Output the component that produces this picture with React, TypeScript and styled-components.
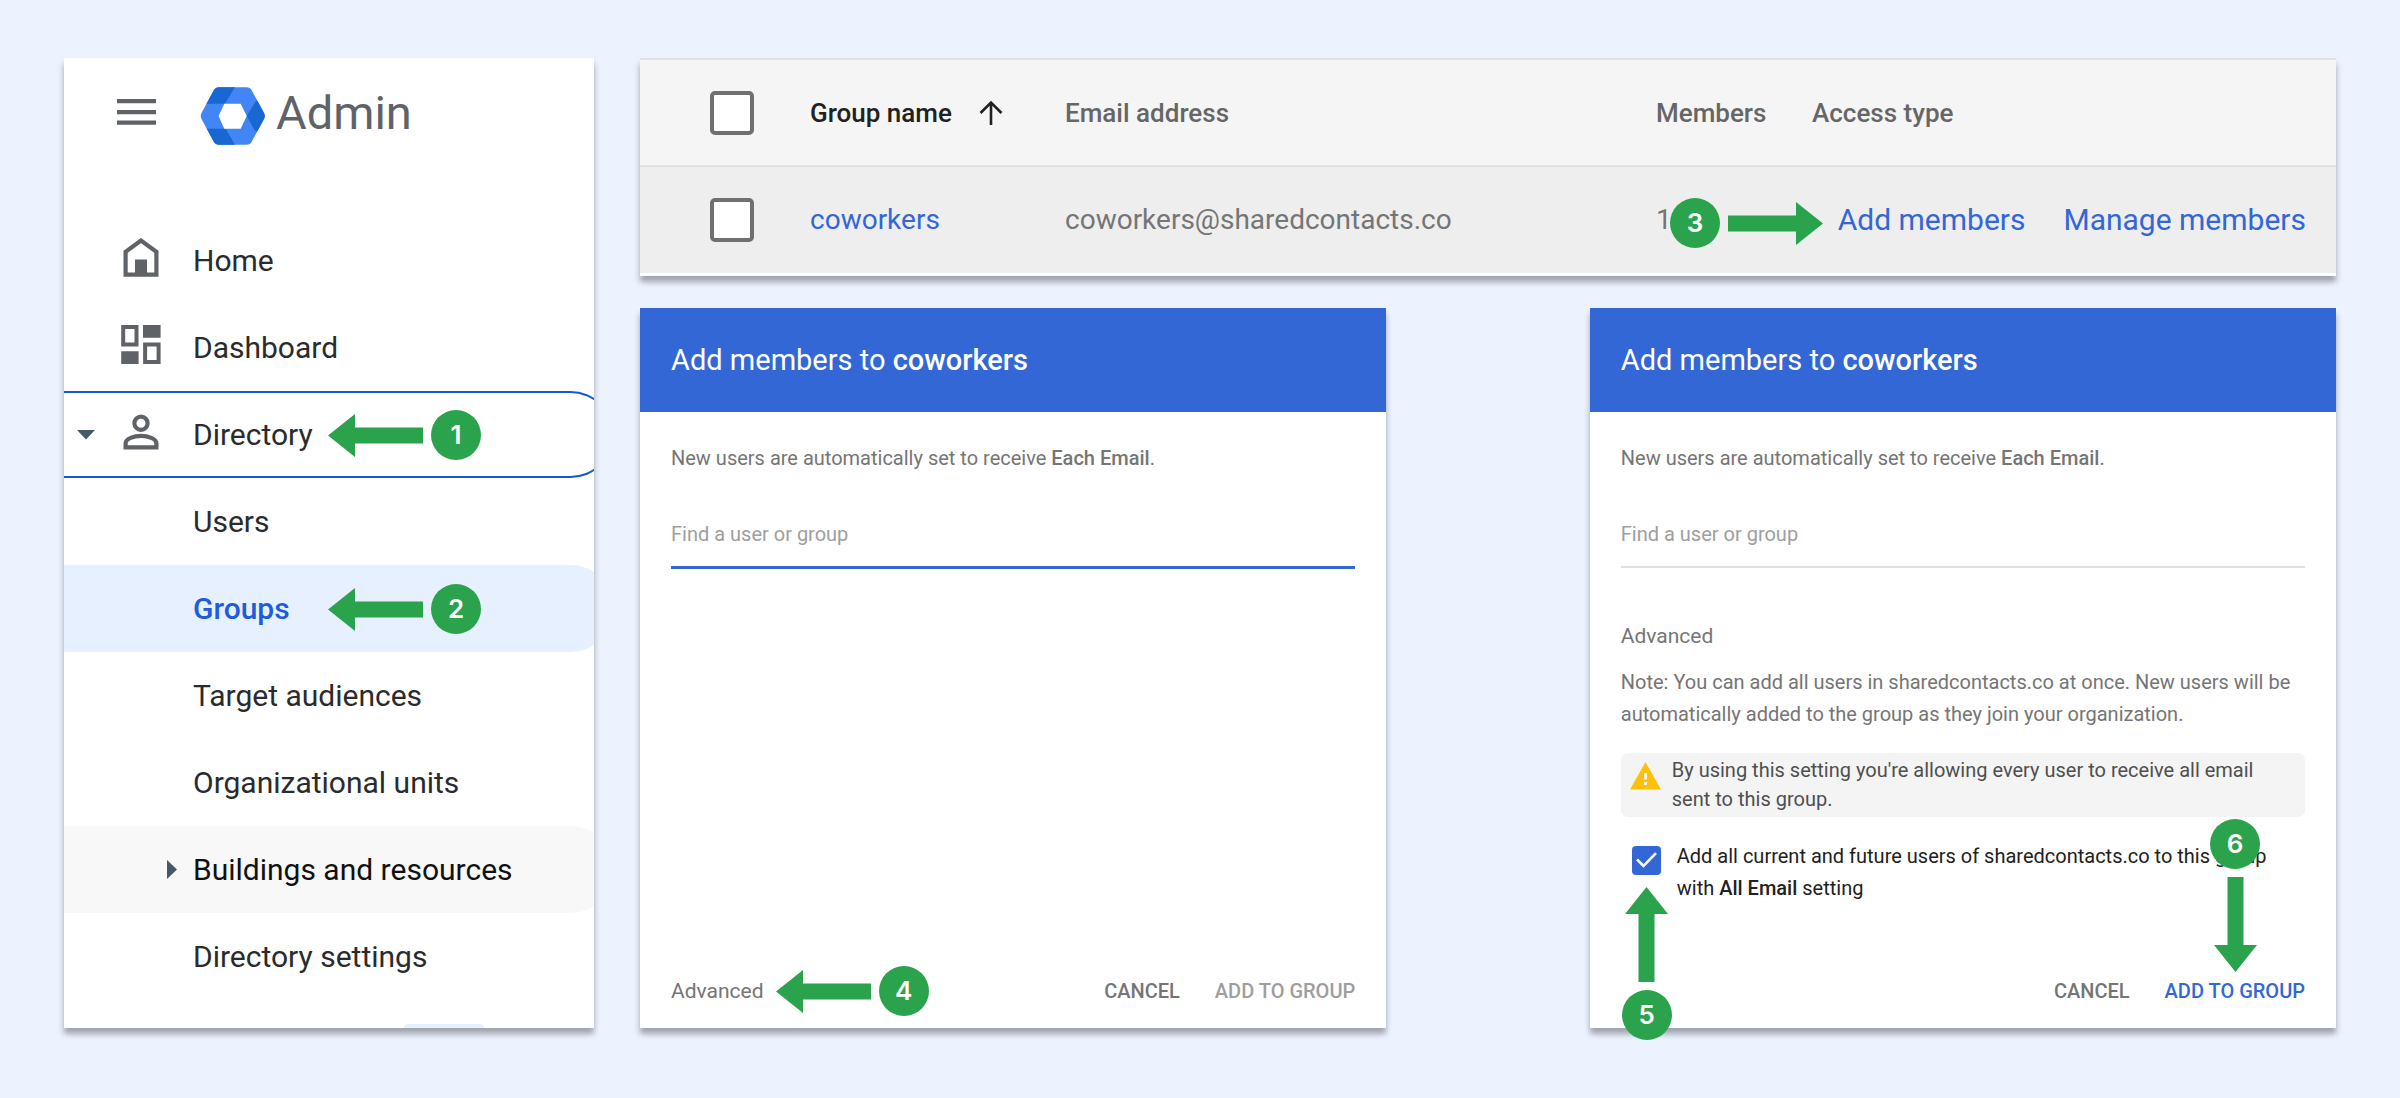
import React from "react";
import styled, { createGlobalStyle, css } from "styled-components";

const color = {
  page: "#ecf3ff",
  blue: "#3367d6",
  green: "#2ba24c",
  grey: "#757575",
  icon: "#5f6368",
  ink: "#212121",
};

const GlobalStyle = createGlobalStyle`
  *, *::before, *::after { box-sizing: border-box; }
  body {
    margin: 0;
    background: ${color.page};
    font-family: Roboto, "Liberation Sans", sans-serif;
    color: ${color.ink};
  }
  button, input { font-family: inherit; }
  strong { font-weight: 500; }
`;

const cardShadow = css`
  box-shadow: 0 6px 6px rgba(0, 0, 0, 0.33);
`;

const Page = styled.main`
  display: flex;
  gap: 46px;
  min-height: 100vh;
  padding: 58px 64px 70px;
`;

/* ---------- callouts ---------- */

type Direction = "left" | "right" | "up" | "down";

const flow: Record<Direction, string> = {
  left: "row",
  right: "row-reverse",
  up: "column",
  down: "column-reverse",
};

const CalloutBox = styled.div<{ $direction: Direction }>`
  display: flex;
  flex-direction: ${(p) => flow[p.$direction]};
  align-items: center;
  gap: 8px;
`;

const Badge = styled.span`
  display: flex;
  align-items: center;
  justify-content: center;
  width: 50px;
  height: 50px;
  border-radius: 50%;
  background: ${color.green};
  color: #fff;
  font-family: Inter, "Liberation Sans", sans-serif;
  font-size: 26px;
  font-weight: 600;
  line-height: 32px;
`;

const Arrow = styled.svg`
  display: block;
  fill: ${color.green};
`;

const shapes: Record<Direction, { w: number; h: number; points: string }> = {
  left: { w: 95, h: 43, points: "0,21.5 27,0 27,13.5 95,13.5 95,29.5 27,29.5 27,43" },
  right: { w: 95, h: 43, points: "95,21.5 68,0 68,13.5 0,13.5 0,29.5 68,29.5 68,43" },
  up: { w: 43, h: 95, points: "21.5,0 43,27 29.5,27 29.5,95 13.5,95 13.5,27 0,27" },
  down: { w: 43, h: 95, points: "21.5,95 43,68 29.5,68 29.5,0 13.5,0 13.5,68 0,68" },
};

function Callout({ step, direction }: { step: number; direction: Direction }) {
  const { w, h, points } = shapes[direction];
  return (
    <CalloutBox $direction={direction}>
      <Arrow width={w} height={h} viewBox={`0 0 ${w} ${h}`} aria-hidden="true">
        <polygon points={points} />
      </Arrow>
      <Badge>{step}</Badge>
    </CalloutBox>
  );
}

/* ---------- sidebar ---------- */

const Sidebar = styled.aside`
  display: flex;
  flex-direction: column;
  flex: 1;
  overflow: hidden;
  background: #fff;
`;

const SidebarShell = styled.div`
  display: flex;
  flex: 0 0 530px;
  ${cardShadow}
`;

const Brand = styled.header`
  display: flex;
  align-items: center;
  height: 64px;
  margin: 23px 0 72px 53px;
`;

const MenuButton = styled.button`
  display: block;
  padding: 0;
  border: 0;
  background: none;
  color: ${color.icon};

  svg { display: block; }
`;

const Logo = styled.svg`
  margin: 0 10px 0 43px;
`;

const BrandName = styled.span`
  color: ${color.icon};
  font-size: 47px;
  line-height: 64px;
`;

const NavList = styled.ul`
  margin: 0;
  padding: 0;
  list-style: none;
`;

type Look = "plain" | "outlined" | "selected" | "hovered";

const looks: Record<Look, ReturnType<typeof css>> = {
  plain: css``,
  outlined: css`
    border-color: #1558d6;
  `,
  selected: css`
    background: #e6f0ff;
    color: #205bdb;
    font-weight: 500;
  `,
  hovered: css`
    background: #f8f8f8;
    color: #111;
  `,
};

const NavItem = styled.li<{ $look: Look }>`
  position: relative;
  display: flex;
  align-items: center;
  height: 87px;
  margin-right: -20px;
  border: 2px solid transparent;
  border-left: 0;
  border-radius: 0 44px 44px 0;
  color: #2a2b2d;
  font-size: 30px;
  line-height: 40px;
  ${(p) => looks[p.$look]}
`;

const NavLink = styled.a`
  display: flex;
  align-items: center;
  flex: 1;
  padding-left: 13px;
  color: inherit;
  text-decoration: none;
`;

const CaretSlot = styled.span`
  display: flex;
  width: 44px;
`;

const IconSlot = styled.span<{ $end?: boolean }>`
  display: flex;
  justify-content: ${(p) => (p.$end ? "flex-end" : "flex-start")};
  width: 56px;
  margin-right: 16px;
  color: ${color.icon};
`;

const NavCallout = styled.div`
  position: absolute;
  top: 17px;
  left: 264px;
`;

const NextPill = styled.div`
  width: 80px;
  height: 4px;
  margin: auto 0 0 340px;
  border-radius: 8px 8px 0 0;
  background: #e6f0ff;
`;

const MenuIcon = () => (
  <svg width="40" height="40" viewBox="0 0 40 40" fill="currentColor" aria-hidden="true">
    <path d="M0 6h39v4.200H0zM0 17h39v4.200H0zM0 27.600h39v4.200H0z" />
  </svg>
);

const AdminLogo = () => (
  <Logo width="66" height="64" viewBox="0 0 66 64" aria-hidden="true">
    <clipPath id="logo-outline">
      <path d="M19 6.300H46.500Q50 6.300 51.700 9.200L64 32Q65.500 35 64 38L51.700 60.800Q50 63.700 46.500 63.700H19Q15.500 63.700 13.800 60.800L1.500 38Q0 35 1.500 32L13.800 9.200Q15.500 6.300 19 6.300Z" />
    </clipPath>
    <g clipPath="url(#logo-outline)">
      <path fill="#4285f4" d="M0 0H66V64H0Z" />
      <path
        fill="#1967d2"
        d="M7.300 22.700H25L35 6.300V0H0V22.700ZM46.700 35L56 19.700L66 20V50.300H55.300ZM0 47.700H25.700L35 63.700V64H0Z"
      />
    </g>
    <path fill="#fff" d="M24.300 22.700H40.700L46.700 35L40.700 47.700H24.300L18.600 35Z" />
  </Logo>
);

const HomeIcon = () => (
  <svg width="40" height="46" viewBox="0 0 40 46" aria-hidden="true">
    <path d="M4.600 36.700V13.700L20 2.500L35.400 13.700V36.700Z" fill="none" stroke="currentColor" strokeWidth="4.200" />
    <path d="M14 21.500H26V37H14Z" fill="currentColor" />
  </svg>
);

const DashboardIcon = () => (
  <svg width="40" height="46" viewBox="0 0 40 46" aria-hidden="true">
    <path d="M2.200 2H15.500V19.500H2.200ZM24.100 19.500H37.600V37H24.100Z" fill="none" stroke="currentColor" strokeWidth="4" />
    <path d="M22 0H39.600V12.800H22ZM0.200 26.300H17.600V39H0.200Z" fill="currentColor" />
  </svg>
);

const PersonIcon = () => (
  <svg width="40" height="46" viewBox="0 0 40 46" fill="none" stroke="currentColor" strokeWidth="4.200" aria-hidden="true">
    <circle cx="20" cy="11.200" r="6.600" />
    <path d="M4.600 35.400V31.500C4.600 26.800 13 23.900 20 23.900S35.400 26.800 35.400 31.500V35.400Z" />
  </svg>
);

const CaretDown = () => (
  <svg width="18" height="10" viewBox="0 0 18 10" fill="#455a64" aria-hidden="true">
    <path d="M0 0H18L9 9.500Z" />
  </svg>
);

const CaretRight = () => (
  <svg width="10" height="19" viewBox="0 0 10 19" fill="#455a64" aria-hidden="true">
    <path d="M0 0L10 9.500L0 19Z" />
  </svg>
);

interface NavEntry {
  label: string;
  look?: Look;
  icon?: React.ReactNode;
  caret?: "down" | "right";
  step?: number;
}

const navEntries: NavEntry[] = [
  { label: "Home", icon: <HomeIcon /> },
  { label: "Dashboard", icon: <DashboardIcon /> },
  { label: "Directory", icon: <PersonIcon />, caret: "down", look: "outlined", step: 1 },
  { label: "Users" },
  { label: "Groups", look: "selected", step: 2 },
  { label: "Target audiences" },
  { label: "Organizational units" },
  { label: "Buildings and resources", caret: "right", look: "hovered" },
  { label: "Directory settings" },
];

function AdminSidebar() {
  return (
    <SidebarShell>
      <Sidebar>
        <Brand>
          <MenuButton type="button" aria-label="Main menu">
            <MenuIcon />
          </MenuButton>
          <AdminLogo />
          <BrandName>Admin</BrandName>
        </Brand>
        <nav>
          <NavList>
            {navEntries.map(({ label, look = "plain", icon, caret, step }) => (
              <NavItem key={label} $look={look}>
                <NavLink href="#">
                  <CaretSlot>{caret === "down" && <CaretDown />}</CaretSlot>
                  <IconSlot $end={caret === "right"}>
                    {icon}
                    {caret === "right" && <CaretRight />}
                  </IconSlot>
                  {label}
                </NavLink>
                {step && (
                  <NavCallout>
                    <Callout step={step} direction="left" />
                  </NavCallout>
                )}
              </NavItem>
            ))}
          </NavList>
        </nav>
        <NextPill />
      </Sidebar>
    </SidebarShell>
  );
}

/* ---------- groups table ---------- */

const Content = styled.div`
  display: flex;
  flex: 1;
  flex-direction: column;
  gap: 32px;
  min-width: 0;
`;

const TableCard = styled.section`
  padding-bottom: 3px;
  border-top: 2px solid #e0e0e0;
  background: #fff;
  ${cardShadow}
`;

const GroupsTable = styled.table`
  width: 100%;
  table-layout: fixed;
  border-collapse: separate;
  border-spacing: 0;
`;

const Col = styled.col<{ $width?: number }>`
  width: ${(p) => (p.$width ? `${p.$width}px` : "auto")};
`;

const HeadCell = styled.th<{ $active?: boolean }>`
  height: 107px;
  padding: 0;
  border-bottom: 2px solid #e0e0e0;
  background: #f5f5f5;
  color: ${(p) => (p.$active ? color.ink : "#666")};
  font-size: 26px;
  font-weight: 500;
  line-height: 32px;
  text-align: left;
`;

const Cell = styled.td`
  position: relative;
  height: 106px;
  padding: 0;
  background: #eee;
  color: ${color.grey};
  font-size: 28px;
  line-height: 32px;
`;

const RowCheckbox = styled.input`
  display: block;
  appearance: none;
  width: 44px;
  height: 44px;
  margin: 0 0 0 70px;
  border: 4px solid #707070;
  border-radius: 5px;
  background: #fff;
`;

const SortLabel = styled.span`
  display: flex;
  align-items: center;
  gap: 27px;
`;

const Link = styled.a<{ $large?: boolean }>`
  color: ${color.blue};
  font-size: ${(p) => (p.$large ? 30 : 28)}px;
  text-decoration: none;
`;

const RowActions = styled.div`
  display: flex;
  justify-content: flex-end;
  gap: 38px;
  padding-right: 30px;
`;

const CellCallout = styled.div`
  position: absolute;
  z-index: 1;
  top: 31px;
  left: 14px;
`;

function Groups() {
  return (
    <TableCard>
      <GroupsTable>
        <colgroup>
          <Col $width={170} />
          <Col $width={255} />
          <Col />
          <Col $width={156} />
          <Col $width={524} />
        </colgroup>
        <thead>
          <tr>
            <HeadCell>
              <RowCheckbox type="checkbox" aria-label="Select all groups" />
            </HeadCell>
            <HeadCell $active>
              <SortLabel>
                Group name
                <svg width="24" height="26" viewBox="0 0 24 26" fill="none" stroke="currentColor" strokeWidth="2.600" aria-hidden="true">
                  <path d="M12 25V3M1.500 13L12 2.500L22.500 13" />
                </svg>
              </SortLabel>
            </HeadCell>
            <HeadCell>Email address</HeadCell>
            <HeadCell>Members</HeadCell>
            <HeadCell>Access type</HeadCell>
          </tr>
        </thead>
        <tbody>
          <tr>
            <Cell>
              <RowCheckbox type="checkbox" aria-label="Select coworkers" />
            </Cell>
            <Cell>
              <Link href="#">coworkers</Link>
            </Cell>
            <Cell>coworkers@sharedcontacts.co</Cell>
            <Cell>
              1
              <CellCallout>
                <Callout step={3} direction="right" />
              </CellCallout>
            </Cell>
            <Cell>
              <RowActions>
                <Link href="#" $large>Add members</Link>
                <Link href="#" $large>Manage members</Link>
              </RowActions>
            </Cell>
          </tr>
        </tbody>
      </GroupsTable>
    </TableCard>
  );
}

/* ---------- dialogs ---------- */

const Dialogs = styled.div`
  display: grid;
  flex: 1;
  grid-template-columns: 44% 44%;
  justify-content: space-between;
`;

const Dialog = styled.section`
  position: relative;
  display: flex;
  flex-direction: column;
  background: #fff;
  color: ${color.grey};
  font-size: 20px;
  ${cardShadow}
`;

const DialogTitle = styled.h2`
  margin: 0;
  padding: 32px 31px;
  background: ${color.blue};
  color: #fff;
  font-size: 29px;
  font-weight: 400;
  line-height: 40px;
`;

const DialogBody = styled.div`
  flex: 1;
  padding: 34px 31px 0;
`;

const Intro = styled.p`
  margin: 0;
  line-height: 24px;
`;

const SearchField = styled.input<{ $focused?: boolean }>`
  display: block;
  width: 100%;
  height: ${(p) => (p.$focused ? 47 : 46)}px;
  margin: 52px 0 0;
  padding: 0 0 20px;
  border: 0;
  border-bottom: ${(p) => (p.$focused ? `3px solid ${color.blue}` : "2px solid #e0e0e0")};
  border-radius: 0;
  outline: 0;
  background: none;
  font-size: 20px;
  line-height: 24px;

  &::placeholder { color: #9e9e9e; opacity: 1; }
`;

const SectionTitle = styled.h3`
  margin: 56px 0 18px;
  font-size: 21px;
  font-weight: 400;
  line-height: 24px;
`;

const Note = styled.p`
  margin: 0;
  line-height: 32px;
`;

const Warning = styled.div`
  display: flex;
  gap: 11px;
  margin: 23px 0;
  padding: 3px 32px 3px 9px;
  border-radius: 7px;
  background: #f4f4f4;
  color: #4f4f4f;
  line-height: 29px;

  svg { flex: none; margin-top: 6px; }
`;

const Option = styled.div`
  display: flex;
  gap: 16px;
  padding-left: 11px;
  color: ${color.ink};
  line-height: 32px;
`;

const Tick = styled.span`
  display: grid;
  flex: none;
  width: 29px;
  height: 29px;
  margin-top: 6px;

  > * { grid-area: 1 / 1; }
  svg { pointer-events: none; }
`;

const OptionBox = styled.input`
  appearance: none;
  width: 29px;
  height: 29px;
  margin: 0;
  border-radius: 4px;
  background: ${color.blue};
`;

const DialogFooter = styled.footer`
  display: flex;
  align-items: center;
  gap: 12px;
  min-height: 50px;
  margin-bottom: 12px;
  padding: 0 31px;
`;

const FooterActions = styled.div`
  display: flex;
  gap: 35px;
  margin-left: auto;
`;

type Tone = "muted" | "disabled" | "primary";

const tones: Record<Tone, string> = {
  muted: color.grey,
  disabled: "#9e9e9e",
  primary: color.blue,
};

const TextButton = styled.button<{ $tone: Tone; $plain?: boolean }>`
  padding: 0;
  border: 0;
  background: none;
  color: ${(p) => tones[p.$tone]};
  font-size: ${(p) => (p.$plain ? 21 : 20)}px;
  font-weight: ${(p) => (p.$plain ? 400 : 500)};
  line-height: 24px;
`;

const TickCallout = styled.div`
  position: absolute;
  bottom: -12px;
  left: 32px;
`;

const SubmitCallout = styled.div`
  position: absolute;
  right: 76px;
  bottom: 56px;
`;

function DialogTop({ id }: { id: string }) {
  return (
    <DialogTitle id={id}>
      Add members to <strong>coworkers</strong>
    </DialogTitle>
  );
}

const IntroText = () => (
  <Intro>
    New users are automatically set to receive <strong>Each Email</strong>.
  </Intro>
);

function App() {
  return (
    <>
      <GlobalStyle />
      <Page>
        <AdminSidebar />
        <Content>
          <Groups />
          <Dialogs>
            <Dialog aria-labelledby="simple-title">
              <DialogTop id="simple-title" />
              <DialogBody>
                <IntroText />
                <SearchField $focused type="text" aria-label="Find a user or group" placeholder="Find a user or group" />
              </DialogBody>
              <DialogFooter>
                <TextButton type="button" $tone="muted" $plain>Advanced</TextButton>
                <Callout step={4} direction="left" />
                <FooterActions>
                  <TextButton type="button" $tone="muted">CANCEL</TextButton>
                  <TextButton type="button" $tone="disabled" disabled>ADD TO GROUP</TextButton>
                </FooterActions>
              </DialogFooter>
            </Dialog>

            <Dialog aria-labelledby="advanced-title">
              <DialogTop id="advanced-title" />
              <DialogBody>
                <IntroText />
                <SearchField type="text" aria-label="Find a user or group" placeholder="Find a user or group" />
                <SectionTitle>Advanced</SectionTitle>
                <Note>
                  Note: You can add all users in sharedcontacts.co at once. New users will be automatically added to
                  the group as they join your organization.
                </Note>
                <Warning>
                  <svg width="31" height="28" viewBox="0 0 31 28" aria-hidden="true">
                    <path fill="#ffc107" d="M15.500 0L31 27.500H0Z" />
                    <path fill="#f4f4f4" d="M14 11H17V17.500H14ZM14 20H17V23H14Z" />
                  </svg>
                  <span>By using this setting you're allowing every user to receive all email sent to this group.</span>
                </Warning>
                <Option>
                  <Tick>
                    <OptionBox id="all-users" type="checkbox" defaultChecked />
                    <svg width="29" height="29" viewBox="0 0 29 29" fill="none" stroke="#fff" strokeWidth="2.600" aria-hidden="true">
                      <path d="M5 13.500L11.500 20L24 7.200" />
                    </svg>
                  </Tick>
                  <label htmlFor="all-users">
                    Add all current and future users of sharedcontacts.co to this group with{" "}
                    <strong>All Email</strong> setting
                  </label>
                </Option>
              </DialogBody>
              <DialogFooter>
                <FooterActions>
                  <TextButton type="button" $tone="muted">CANCEL</TextButton>
                  <TextButton type="button" $tone="primary">ADD TO GROUP</TextButton>
                </FooterActions>
              </DialogFooter>
              <TickCallout>
                <Callout step={5} direction="up" />
              </TickCallout>
              <SubmitCallout>
                <Callout step={6} direction="down" />
              </SubmitCallout>
            </Dialog>
          </Dialogs>
        </Content>
      </Page>
    </>
  );
}

export default App;
